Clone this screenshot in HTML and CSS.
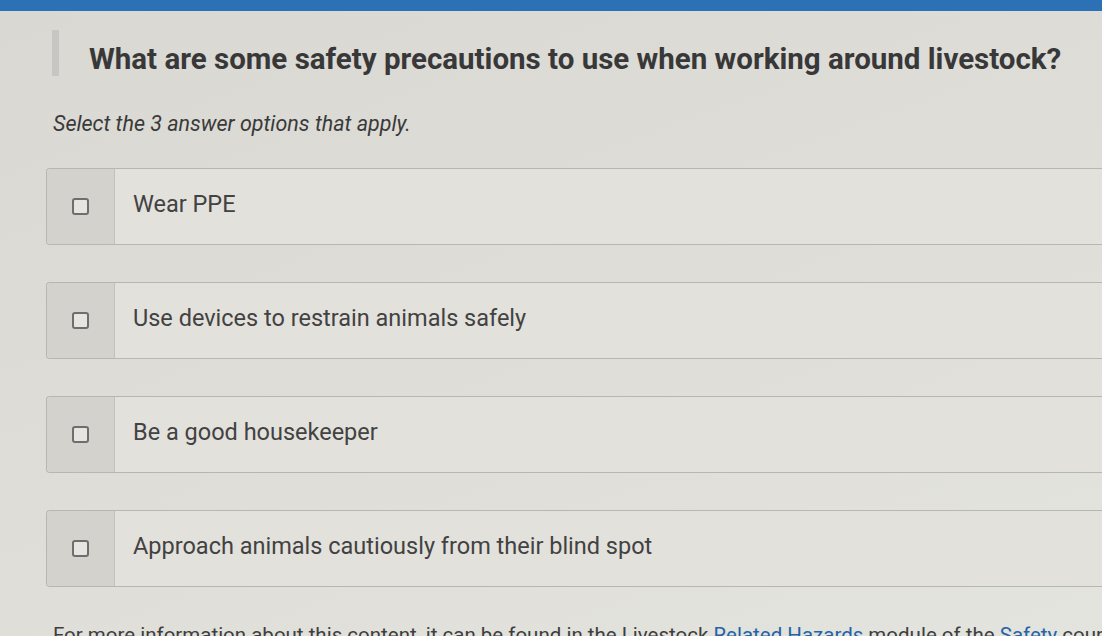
FILE: index.html
```html
<!DOCTYPE html>
<html>
<head>
<meta charset="utf-8"/>
<title>Livestock Safety Quiz</title>
<link rel="stylesheet" href="styles.css">
</head>
<body>
<div class="topbar"></div>

<main class="quiz">
  <header class="question">
    <span class="marker"></span>
    <h1>What are some safety precautions to use when working around livestock?</h1>
  </header>

  <p class="prompt">Select the 3 answer options that apply.</p>

  <ul class="options">
    <li class="option">
      <span class="check-cell"><span class="box"></span></span>
      <span class="label">Wear PPE</span>
    </li>
    <li class="option">
      <span class="check-cell"><span class="box"></span></span>
      <span class="label">Use devices to restrain animals safely</span>
    </li>
    <li class="option">
      <span class="check-cell"><span class="box"></span></span>
      <span class="label">Be a good housekeeper</span>
    </li>
    <li class="option">
      <span class="check-cell"><span class="box"></span></span>
      <span class="label">Approach animals cautiously from their blind spot</span>
    </li>
  </ul>

  <p class="note">For more information about this content, it can be found in the Livestock <a href="#">Related Hazards</a> module of the <a href="#">Safety</a> course.</p>
</main>
</body>
</html>
```

FILE: styles.css
```css
html, body {
   margin: 0;
   height: 100%;
   overflow: hidden;
}

body {
   font-family: Roboto, "Liberation Sans", sans-serif;
   background: linear-gradient(160deg, #d9d8d3 0%, #deddd8 50%, #e4e4de 100%);
   color: #3d3d3d;
}

.topbar {
   height: 11px;
   background-color: #2c70b6;
}

.quiz {
   padding: 19px 0 0 46px;
}

/* question heading with the grey bar on its left */
.question {
   display: flex;
   align-items: flex-start;
   gap: 30px;
   margin-left: 6px;
}

.marker {
   width: 7px;
   height: 46px;
   flex-shrink: 0;
   background-color: #c6c6c2;
}

.question h1 {
   margin: 12px 0 0 0;
   font-size: 29.5px;
   font-weight: 700;
   color: #383838;
   white-space: nowrap;
}

.prompt {
   margin: 35px 0 0 7px;
   font-size: 21.5px;
   font-style: italic;
   color: #3a3a3a;
}

.options {
   list-style: none;
   margin: 32px 0 0 0;
   padding: 0;
   display: flex;
   flex-direction: column;
   gap: 37px;
}

.option {
   display: flex;
   height: 77px;
   background-color: #e2e1dc;
   border: 1px solid #b7b6b1;
   border-right: none;
   border-radius: 4px 0 0 4px;
   box-sizing: border-box;
}

.check-cell {
   width: 67px;
   flex-shrink: 0;
   display: flex;
   align-items: center;
   justify-content: center;
   background-color: #d4d2cd;
   border-right: 1px solid #c2c1bc;
   border-radius: 4px 0 0 4px;
}

.box {
   width: 13px;
   height: 13px;
   border: 2px solid #6e6e6c;
   border-radius: 3px;
   background-color: #e6e5e1;
}

.label {
   padding: 21px 0 0 18px;
   font-size: 23.5px;
   color: #424242;
}

/* footer line runs past the bottom of the window */
.note {
   margin: 36px 0 0 7px;
   font-size: 20.5px;
   color: #3e3e3e;
   white-space: nowrap;
}

.note a {
   color: #2463a8;
   text-decoration: none;
}
```
